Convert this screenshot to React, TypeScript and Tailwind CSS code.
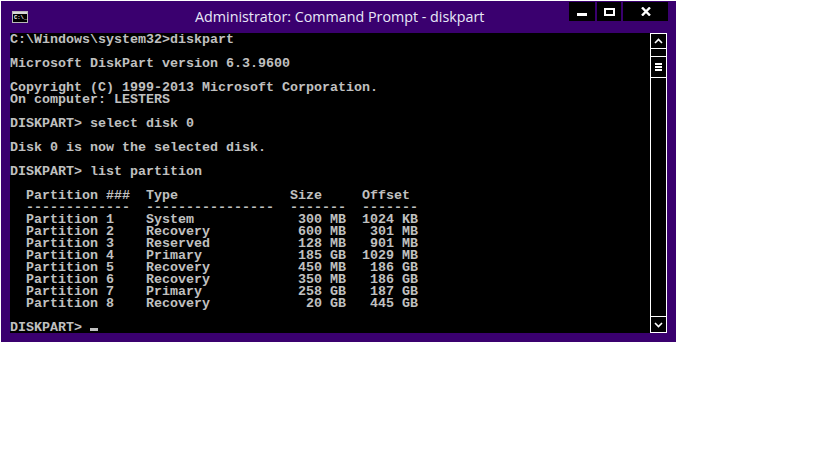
const consoleText = `C:\\Windows\\system32>diskpart

Microsoft DiskPart version 6.3.9600

Copyright (C) 1999-2013 Microsoft Corporation.
On computer: LESTERS

DISKPART> select disk 0

Disk 0 is now the selected disk.

DISKPART> list partition

  Partition ###  Type              Size     Offset
  -------------  ----------------  -------  -------
  Partition 1    System             300 MB  1024 KB
  Partition 2    Recovery           600 MB   301 MB
  Partition 3    Reserved           128 MB   901 MB
  Partition 4    Primary            185 GB  1029 MB
  Partition 5    Recovery           450 MB   186 GB
  Partition 6    Recovery           350 MB   186 GB
  Partition 7    Primary            258 GB   187 GB
  Partition 8    Recovery            20 GB   445 GB

DISKPART> `;

const CmdIcon = () => (
  <div className="mt-[10px] ml-[11px] flex h-[12px] w-[16px] flex-col border border-[#b8b8b8] bg-black">
    <div className="h-[2px] shrink-0 bg-[#d8d8d8]" />
    <span className="pl-[1px] font-['Liberation_Mono',monospace] text-[5.5px] leading-[8px] font-bold whitespace-pre text-white">C:\_</span>
  </div>
);

export default function App() {
  return (
    <div className="h-[460px] w-[819px] bg-white pt-[1px] pl-[1px]">
      <div className="flex h-[341px] w-[675px] flex-col bg-[#3a006f]">
        {/* Title bar */}
        <div className="flex h-[32px] items-start">
          <CmdIcon />
          <span className="mt-[6px] ml-[167px] font-['Open_Sans',sans-serif] text-[14.3px] leading-[20px] whitespace-pre text-[#e8e8f8]">
            Administrator: Command Prompt - diskpart
          </span>
          <div className="mt-[1px] mr-[8px] ml-auto flex gap-[2px]">
            <div className="flex h-[19px] w-[26px] items-end justify-center bg-black pb-[5px]">
              <div className="h-[3px] w-[10px] bg-white" />
            </div>
            <div className="flex h-[19px] w-[24px] items-center justify-center bg-black">
              <div className="h-[8px] w-[11px] border-2 border-white" />
            </div>
            <div className="flex h-[19px] w-[45px] items-center justify-center bg-black">
              <svg width="10" height="9" viewBox="0 0 10 9">
                <path d="M1 0.5 L9 8.5 M9 0.5 L1 8.5" stroke="#fff" strokeWidth="2.4" />
              </svg>
            </div>
          </div>
        </div>
        {/* Console */}
        <div className="ml-[9px] flex h-[300px] w-[657px]">
          <div className="h-full w-[640px] bg-black pt-[1px]">
            <pre className="font-['Liberation_Mono',monospace] text-[13.33px] leading-[12px] font-bold text-[#c0c0c0]">
              {consoleText}
              <span className="inline-block h-[3px] w-[8px] bg-[#c0c0c0] align-baseline" />
            </pre>
          </div>
          {/* Scrollbar */}
          <div className="flex h-[300px] w-[17px] flex-col border-x border-white bg-black">
            <div className="flex h-[16px] items-center justify-center border-y border-white">
              <svg width="9" height="6" viewBox="0 0 9 6">
                <path d="M1 5 L4.5 1.5 L8 5" stroke="#fff" strokeWidth="1.6" fill="none" />
              </svg>
            </div>
            <div className="mt-[7px] flex h-[22px] flex-col items-center justify-center gap-[1px] border-y border-white">
              <div className="h-[2px] w-[7px] bg-white" />
              <div className="h-[2px] w-[7px] bg-white" />
              <div className="h-[2px] w-[7px] bg-white" />
            </div>
            <div className="mt-auto flex h-[17px] items-center justify-center border-y border-white">
              <svg width="9" height="6" viewBox="0 0 9 6">
                <path d="M1 1 L4.5 4.5 L8 1" stroke="#fff" strokeWidth="1.6" fill="none" />
              </svg>
            </div>
          </div>
        </div>
      </div>
    </div>
  );
}
